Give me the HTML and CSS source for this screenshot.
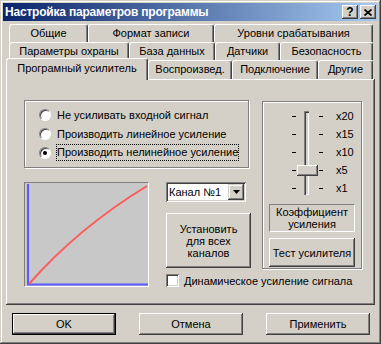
FILE: index.html
```html
<!DOCTYPE html>
<html lang="ru">
<head>
    <meta charset="UTF-8">
    <title>Настройка параметров программы</title>
    <link rel="stylesheet" href="styles.css">
</head>
<body>
    <div class="window">
        <div class="titlebar">
            <span class="title">Настройка параметров программы</span>
            <div class="title-buttons">
                <button class="title-btn help">?</button>
                <button class="title-btn close">
                    <svg width="8" height="7" viewBox="0 0 8 7"><path d="M0.5 0.5L7.5 6.5M7.5 0.5L0.5 6.5" stroke="#000" stroke-width="1.7"/></svg>
                </button>
            </div>
        </div>

        <div class="tabs">
            <div class="tab-row row-back">
                <div class="tab w79">Общие</div>
                <div class="tab w126">Формат записи</div>
                <div class="tab w159">Уровни срабатывания</div>
            </div>
            <div class="tab-row row-back">
                <div class="tab w120">Параметры охраны</div>
                <div class="tab w86">База данных</div>
                <div class="tab w65">Датчики</div>
                <div class="tab w93">Безопасность</div>
            </div>
            <div class="tab-row row-front">
                <div class="tab active w142">Програмный усилитель</div>
                <div class="tab w84">Воспроизвед.</div>
                <div class="tab w86">Подключение</div>
                <div class="tab w55">Другие</div>
            </div>
        </div>

        <div class="panel">
            <div class="left-col">
                <div class="groupbox radios">
                    <div class="radio-row"><span class="radio"></span>Не усиливать входной сигнал</div>
                    <div class="radio-row"><span class="radio"></span>Производить линейное усиление</div>
                    <div class="radio-row"><span class="radio checked"></span><span class="focus">Производить нелинейное усиление</span></div>
                </div>
                <div class="lower">
                    <div class="graph">
                        <svg width="123" height="103" viewBox="0 0 123 103">
                            <path d="M3 1V101.5H123" fill="none" stroke="#5a5aff" stroke-width="2"/>
                            <path d="M4 101Q53 45 122 3" fill="none" stroke="#ff5a5a" stroke-width="2"/>
                        </svg>
                    </div>
                    <div class="stack">
                        <div class="combo">
                            <span class="combo-text">Канал №1</span>
                            <span class="combo-btn">
                                <svg width="7" height="4" viewBox="0 0 7 4"><path d="M0 0h7L3.5 4z"/></svg>
                            </span>
                        </div>
                        <button class="btn set-all">Установить<br>для всех<br>каналов</button>
                        <div class="check-row"><span class="checkbox"></span>Динамическое усиление сигнала</div>
                    </div>
                </div>
            </div>

            <div class="groupbox gain">
                <div class="slider">
                    <div class="tick-row"><span></span><i></i><span></span><i></i><span></span><b>x20</b></div>
                    <div class="tick-row"><span></span><i></i><span></span><i></i><span></span><b>x15</b></div>
                    <div class="tick-row"><span></span><i></i><span></span><i></i><span></span><b>x10</b></div>
                    <div class="tick-row"><span></span><i></i><span></span><i></i><span></span><b>x5</b></div>
                    <div class="tick-row"><span></span><i></i><span></span><i></i><span></span><b>x1</b></div>
                    <div class="track"></div>
                    <div class="thumb"></div>
                </div>
                <div class="gain-label">Коэффициент<br>усиления</div>
                <button class="btn test">Тест усилителя</button>
            </div>
        </div>

        <div class="dialog-buttons">
            <button class="btn dlg default">OK</button>
            <button class="btn dlg">Отмена</button>
            <button class="btn dlg">Применить</button>
        </div>
    </div>
</body>
</html>
```

FILE: styles.css
```css
body {
    margin: 0;
    background: #d4d0c8;
    font-family: "Liberation Sans", Arial, sans-serif;
    font-size: 11px;
    color: #000;
}
.window {
    width: 381px;
    height: 344px;
    box-sizing: border-box;
    padding: 3px;
    background: #d4d0c8;
    box-shadow: inset -1px -1px #404040, inset 1px 1px #d4d0c8, inset -2px -2px #808080, inset 2px 2px #fff;
}
.titlebar {
    height: 18px;
    display: flex;
    align-items: center;
    justify-content: space-between;
    padding: 0 2px 0 2px;
    background: linear-gradient(to right, #0a246a, #a6caf0);
}
.title {
    color: #fff;
    font-weight: bold;
    font-size: 12px;
    letter-spacing: -0.2px;
}
.title-buttons {
    display: flex;
    gap: 2px;
}
.title-btn {
    width: 16px;
    height: 14px;
    padding: 0;
    border: none;
    background: #d4d0c8;
    box-shadow: inset -1px -1px #404040, inset 1px 1px #fff, inset -2px -2px #808080;
    display: flex;
    align-items: center;
    justify-content: center;
    font-family: "Liberation Sans", Arial, sans-serif;
    font-weight: bold;
    font-size: 12px;
    line-height: 14px;
}

/* tabs */
.tabs {
    margin-top: 3px;
}
.tab-row {
    display: flex;
}
.row-back {
    height: 18px;
    margin-left: 6px;
}
.row-front {
    height: 19px;
    margin-left: 3px;
    align-items: flex-end;
}
.tab {
    box-sizing: border-box;
    height: 100%;
    border-top: 1px solid #fff;
    border-left: 1px solid #fff;
    border-right: 1px solid #404040;
    border-radius: 3px 3px 0 0;
    box-shadow: inset -1px 0 #808080;
    text-align: center;
    line-height: 17px;
    white-space: nowrap;
    background: #d4d0c8;
}
.tab.active {
    position: relative;
    z-index: 1;
    height: 22px;
    margin-bottom: -1px;
    line-height: 19px;
}
.w55 { width: 55px; }
.w65 { width: 65px; }
.w79 { width: 79px; }
.w84 { width: 84px; }
.w86 { width: 86px; }
.w93 { width: 93px; }
.w120 { width: 120px; }
.w126 { width: 126px; }
.w142 { width: 142px; }
.w159 { width: 159px; }

/* panel */
.panel {
    box-sizing: border-box;
    width: 369px;
    height: 226px;
    margin-left: 3px;
    padding: 21px 0 0 18px;
    display: flex;
    align-items: flex-start;
    box-shadow: inset -1px -1px #404040, inset 1px 1px #fff, inset -2px -2px #808080;
}
.groupbox {
    box-sizing: border-box;
    border: 1px solid #808080;
    box-shadow: inset 1px 1px #fff, 1px 1px #fff;
}
.left-col {
    width: 227px;
}
.radios {
    width: 225px;
    height: 68px;
    padding: 4px 0 0 14px;
}
.radio-row {
    height: 19px;
    display: flex;
    align-items: center;
    white-space: nowrap;
}
.radio {
    box-sizing: border-box;
    width: 12px;
    height: 12px;
    margin-right: 6px;
    border-radius: 50%;
    border: 1px solid;
    border-color: #808080 #fff #fff #808080;
    background: #fff;
    box-shadow: inset 1px 1px #404040;
    position: relative;
}
.radio.checked::after {
    content: "";
    position: absolute;
    left: 3px;
    top: 3px;
    width: 4px;
    height: 4px;
    border-radius: 50%;
    background: #000;
}
.focus {
    outline: 1px dotted #000;
    outline-offset: 0;
    padding: 1px 0 2px 0;
}
.lower {
    display: flex;
    margin-top: 14px;
}
.graph {
    width: 125px;
    height: 105px;
    box-sizing: border-box;
    border: 1px solid;
    border-color: #808080 #fff #fff #808080;
    background: #c8c8c8;
}
.graph svg {
    display: block;
}
.stack {
    margin-left: 17px;
    width: 85px;
}
.combo {
    box-sizing: border-box;
    width: 80px;
    height: 20px;
    background: #fff;
    display: flex;
    align-items: center;
    justify-content: space-between;
    padding: 2px;
    box-shadow: inset 1px 1px #808080, inset -1px -1px #fff, inset 2px 2px #404040, inset -2px -2px #d4d0c8;
}
.combo-text {
    padding-left: 1px;
}
.combo-btn {
    width: 16px;
    height: 16px;
    background: #d4d0c8;
    box-shadow: inset -1px -1px #404040, inset 1px 1px #d4d0c8, inset -2px -2px #808080, inset 2px 2px #fff;
    display: flex;
    align-items: center;
    justify-content: center;
}
.combo-btn svg {
    display: block;
}
.btn {
    box-sizing: border-box;
    padding: 0;
    border: none;
    background: #d4d0c8;
    font-family: "Liberation Sans", Arial, sans-serif;
    font-size: 11px;
    color: #000;
    box-shadow: inset -1px -1px #404040, inset 1px 1px #fff, inset -2px -2px #808080, inset 2px 2px #d4d0c8;
}
.set-all {
    display: block;
    width: 85px;
    height: 55px;
    margin-top: 11px;
    line-height: 12px;
}
.check-row {
    display: flex;
    align-items: center;
    margin-top: 6px;
    height: 13px;
    white-space: nowrap;
}
.checkbox {
    box-sizing: border-box;
    flex: none;
    width: 13px;
    height: 13px;
    margin-right: 5px;
    background: #fff;
    box-shadow: inset 1px 1px #808080, inset -1px -1px #fff, inset 2px 2px #404040, inset -2px -2px #d4d0c8;
}

/* gain slider box */
.gain {
    width: 100px;
    height: 168px;
    margin: 1px 0 0 11px;
    display: flex;
    flex-direction: column;
}
.slider {
    position: relative;
    margin-top: 5px;
}
.tick-row {
    height: 18px;
    display: grid;
    grid-template-columns: 29px 4px 23px 4px 13px auto;
    align-items: center;
}
.tick-row i {
    height: 1px;
    background: #000;
}
.tick-row b {
    font-weight: normal;
}
.track {
    position: absolute;
    left: 41px;
    top: 4px;
    width: 5px;
    height: 84px;
    box-sizing: border-box;
    background: #d4d0c8;
    box-shadow: inset 1px 1px #808080, inset 2px 2px #404040, inset -1px -1px #fff, inset -2px -2px #d4d0c8;
}
.thumb {
    position: absolute;
    left: 34px;
    top: 58px;
    width: 21px;
    height: 11px;
    background: #d4d0c8;
    box-shadow: inset -1px -1px #404040, inset 1px 1px #fff, inset -2px -2px #808080;
}
.gain-label {
    box-sizing: border-box;
    width: 86px;
    height: 28px;
    margin: 7px 0 0 6px;
    border: 1px solid;
    border-color: #808080 #fff #fff #808080;
    text-align: center;
    line-height: 12px;
    padding-top: 1px;
}
.test {
    width: 86px;
    height: 29px;
    margin: 6px 0 0 6px;
}

/* bottom buttons */
.dialog-buttons {
    display: flex;
    justify-content: space-between;
    margin-top: 8px;
    padding: 0 8px 0 9px;
}
.dlg {
    width: 104px;
    height: 22px;
}
.dlg.default {
    border: 1px solid #000;
}
```
